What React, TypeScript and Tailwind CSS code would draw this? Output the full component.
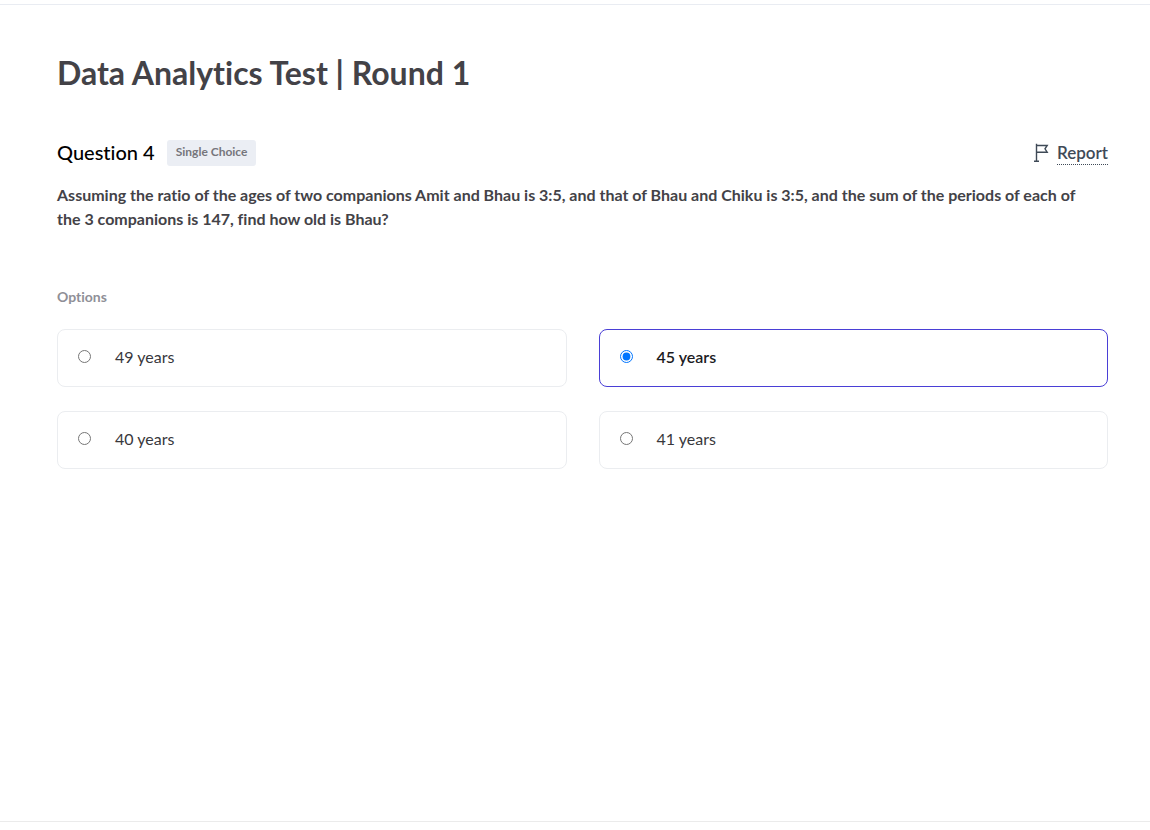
import { useState } from "react";

const options = ["49 years", "45 years", "40 years", "41 years"];

function FlagIcon() {
  return (
    <svg
      width="16"
      height="20"
      viewBox="0 0 16 20"
      fill="none"
      stroke="#3f4a57"
      strokeWidth="1.4"
      aria-hidden="true"
    >
      <path d="M3.5 0.8V18M1 18.2H6" />
      <path d="M3.5 2.5H14.2L12 5.8L14.2 9.2H3.5" />
    </svg>
  );
}

export default function App() {
  const [selected, setSelected] = useState(1);

  return (
    <div className="flex min-h-screen flex-col bg-white font-['Lato','Open_Sans',sans-serif] [font-variant-ligatures:none]">
      <header className="h-[5px] border-b border-[#e9ecf2]" />

      <main className="flex-1 pt-12 pr-[42px] pl-[57px]">
        <h1 className="text-[32px] leading-10 font-bold text-[#434247]">Data Analytics Test | Round 1</h1>

        <div className="mt-[46px] flex h-7 items-center justify-between">
          <div className="flex items-center gap-3">
            <h2 className="pb-0.5 text-[20px] leading-6 font-medium text-black">Question 4</h2>
            <span className="rounded-[3px] bg-[#ebeef4] px-[9px] pt-1 pb-1.5 text-[12px] leading-4 font-bold text-[#76767c]">
              Single Choice
            </span>
          </div>
          <button type="button" className="flex items-center gap-2 text-[17px] leading-5 font-semibold text-[#3f4a57]">
            <FlagIcon />
            <span className="border-b border-dotted border-[#3f4a57] pt-px pb-px">Report</span>
          </button>
        </div>

        <p className="mt-4 pr-4 text-[16px] leading-6 font-bold text-[#434247]">
          Assuming the ratio of the ages of two companions Amit and Bhau is 3:5, and that of Bhau and Chiku is 3:5, and
          the sum of the periods of each of the 3 companions is 147, find how old is Bhau?
        </p>

        <fieldset className="mt-14">
          <legend className="text-[14px] leading-5 font-bold text-[#8f8f97]">Options</legend>
          <div className="mt-[22px] grid grid-cols-2 gap-x-8 gap-y-6">
            {options.map((option, index) => (
              <label
                key={option}
                className={
                  index === selected
                    ? "flex h-[58px] items-center gap-6 rounded-lg border border-[#4a3fd6] px-5 text-[16px] font-semibold text-[#1c1c1f]"
                    : "flex h-[58px] items-center gap-6 rounded-lg border border-[#ebedf0] px-5 text-[16px] font-normal text-[#38383c]"
                }
              >
                <input
                  type="radio"
                  name="answer"
                  checked={index === selected}
                  onChange={() => setSelected(index)}
                  className="mb-[3px] size-[13px]"
                />
                <span className="pb-0.5">{option}</span>
              </label>
            ))}
          </div>
        </fieldset>
      </main>

      <footer className="h-[9px] border-t border-[#ebebeb]" />
    </div>
  );
}
